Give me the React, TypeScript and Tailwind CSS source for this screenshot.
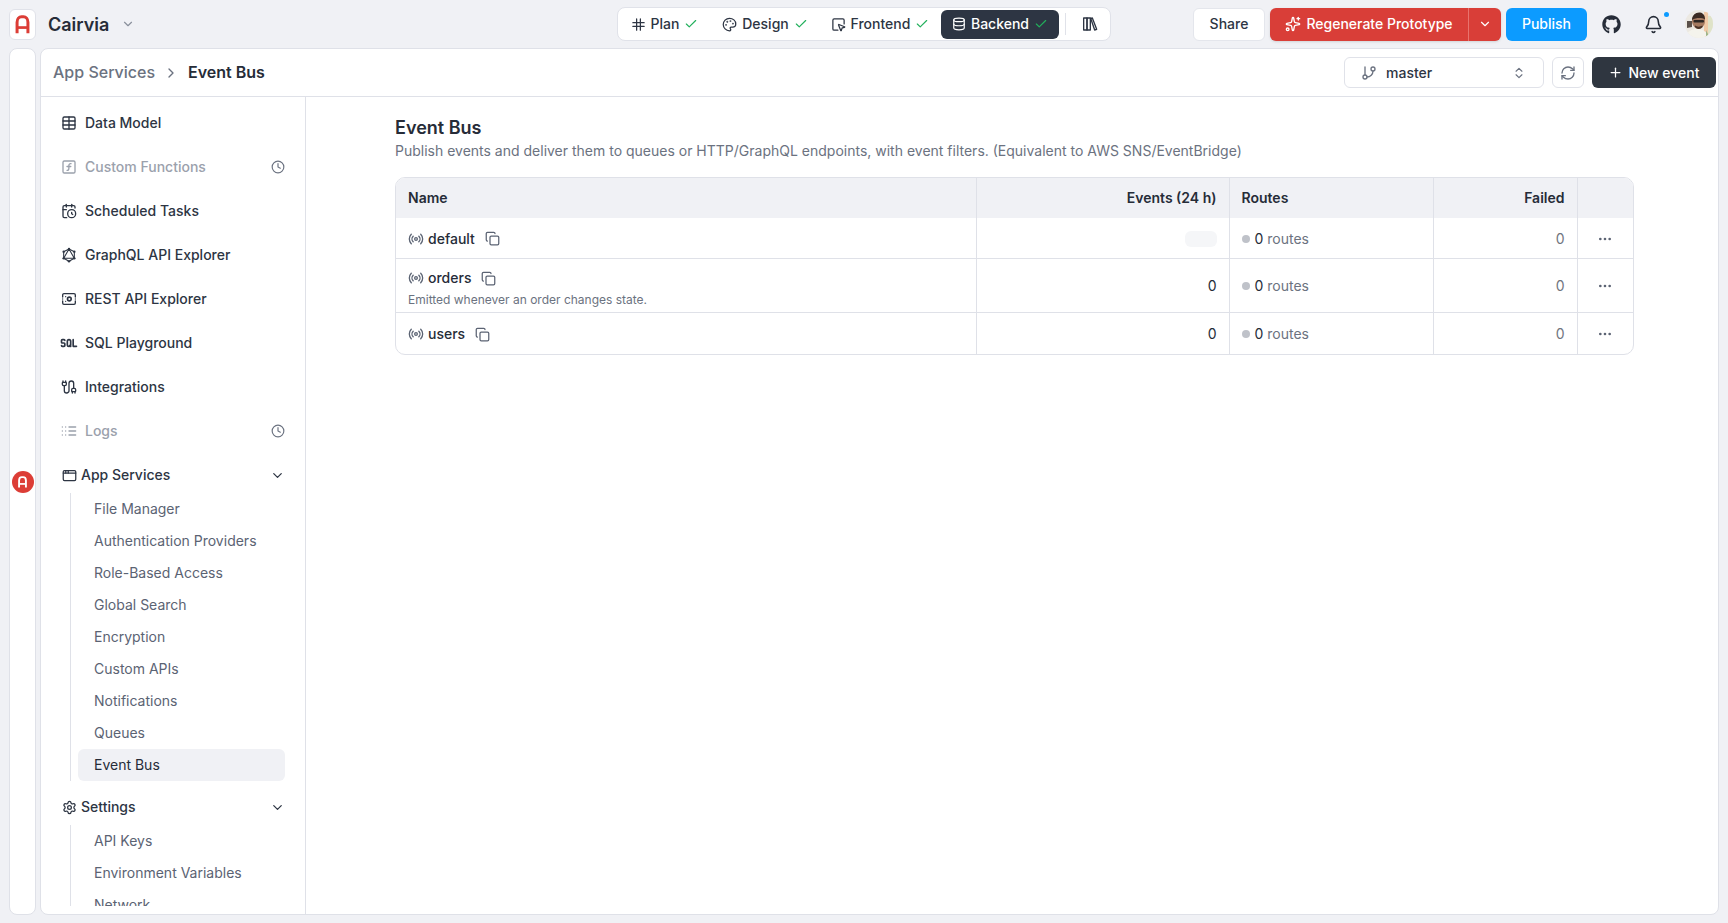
import {
  AppWindow,
  Bell,
  Cable,
  CalendarClock,
  Check,
  ChevronDown,
  ChevronRight,
  ChevronsUpDown,
  Clock,
  Copy,
  Database,
  Ellipsis,
  GitBranch,
  Palette,
  Plus,
  Radio,
  RefreshCw,
  Settings,
  Sparkles,
  SquareFunction,
  SquareMousePointer,
  Table,
} from "lucide-react";
import { FaGithub } from "react-icons/fa";
import { TbSql } from "react-icons/tb";

const Logo = ({ className }: { className?: string }) => (
  <svg viewBox="0 0 24 28" fill="none" className={className}>
    <path
      d="M4 27V10.5C4 5.5 7 2.5 10.5 2.5h3C17 2.5 20 5.5 20 10.5V27"
      stroke="currentColor"
      strokeWidth="4.4"
    />
    <path d="M4 18.5h16" stroke="currentColor" strokeWidth="4" />
  </svg>
);

const PlanIcon = ({ className }: { className?: string }) => (
  <svg viewBox="0 0 24 24" fill="none" stroke="currentColor" strokeWidth="2" strokeLinecap="round" className={className}>
    <path d="M9 3v18M15 3v18M3 9h18M3 15h18" />
  </svg>
);

const BooksIcon = ({ className }: { className?: string }) => (
  <svg viewBox="0 0 24 24" fill="none" stroke="currentColor" strokeWidth="2" strokeLinejoin="round" className={className}>
    <rect x="2.5" y="3" width="5" height="18" />
    <rect x="7.5" y="3" width="5" height="18" />
    <path d="M13 3.5l2.5-.5 6.5 17-3 1z" />
  </svg>
);

const GraphqlIcon = ({ className }: { className?: string }) => (
  <svg viewBox="0 0 24 24" fill="none" stroke="currentColor" strokeWidth="1.6" strokeLinejoin="round" className={className}>
    <path d="M12 3l8 14H4z" />
    <path d="M4 7v10M20 7v10M12 3L4 7M12 3l8 4M4 17l8 4.5 8-4.5" />
    <g fill="currentColor" stroke="none">
      <circle cx="12" cy="3" r="1.8" />
      <circle cx="4" cy="7" r="1.8" />
      <circle cx="20" cy="7" r="1.8" />
      <circle cx="4" cy="17" r="1.8" />
      <circle cx="20" cy="17" r="1.8" />
      <circle cx="12" cy="21.5" r="1.8" />
    </g>
  </svg>
);

const RestIcon = ({ className }: { className?: string }) => (
  <svg viewBox="0 0 24 24" fill="none" stroke="currentColor" strokeWidth="2" strokeLinecap="round" className={className}>
    <path d="M2.5 9V6a2 2 0 0 1 2-2h15a2 2 0 0 1 2 2v3" />
    <path d="M2.5 15v3a2 2 0 0 0 2 2h15a2 2 0 0 0 2-2v-3" />
    <path d="M2.5 12h.01M21.5 12h.01M7 8.5h.01M7 15.5h.01" />
    <circle cx="12.5" cy="12" r="2.8" strokeWidth="2.4" />
  </svg>
);

const LogsIcon = ({ className }: { className?: string }) => (
  <svg viewBox="0 0 24 24" fill="none" stroke="currentColor" strokeWidth="2" strokeLinecap="round" className={className}>
    <path d="M2 6h.01M7 6h.01M2 12h.01M7 12h.01M2 18h.01M7 18h.01M12 6h10M12 12h10M12 18h10" />
  </svg>
);

const Avatar = () => (
  <svg viewBox="0 0 28 28" className="h-[28px] w-[28px] rounded-full">
    <rect width="28" height="28" fill="#ece9e2" />
    <rect x="19" y="2" width="4" height="26" fill="#f0c9a6" />
    <rect x="23" y="6" width="5" height="22" fill="#dfe3c8" />
    <path d="M2 11h5v6l-5 1z" fill="#5a504a" />
    <path d="M0 28c2-7 7-9 12-9s10 2 12 9z" fill="#f4f3ec" />
    <path d="M7 11c0-5 3-8 7-8s6 3 6 8c0 4-3 8-6.500 8S7 15 7 11z" fill="#a57a60" />
    <path d="M7 10c0-5 4-8 8-7.500s5 4 5 7c-3-2-9-2-13 .5z" fill="#3a2a22" />
    <rect x="8.500" y="10" width="10.500" height="2.400" rx="1" fill="#2c2623" />
    <path d="M10 15.500c2 1.500 5 1.500 7.500 0v1.500c-2 2.500-5.500 2.500-7.500 0z" fill="#4a3429" />
    <path d="M21 20l3 6-3 1z" fill="#9db58a" />
  </svg>
);

const steps = [
  { label: "Plan", icon: PlanIcon, width: "w-[87px]" },
  { label: "Design", icon: Palette, width: "w-[114px]" },
  { label: "Frontend", icon: SquareMousePointer, width: "w-[116px]" },
];

const TopBar = () => (
  <header className="flex h-[48px] shrink-0 items-center pl-[9px] pr-[15px]">
    <div className="flex w-[608px] items-center">
      <div className="flex h-[31px] w-[27px] items-center justify-center rounded-md border border-[#e0e2e9] bg-white text-[#dc3d36]">
        <Logo className="h-[19px] w-[17px]" />
      </div>
      <span className="ml-[12px] text-[18px] font-semibold text-[#262c38]">Cairvia</span>
      <ChevronDown className="ml-[12px] h-[14px] w-[14px] text-[#8a909c]" />
    </div>

    <nav className="flex h-[34px] w-[494px] items-center rounded-lg border border-[#e0e2e9] bg-white pl-[3px] text-sm font-medium text-[#2d3543]">
      {steps.map(({ label, icon: Icon, width }) => (
        <div key={label} className={`flex items-center justify-center gap-[5px] ${width}`}>
          <Icon className="h-[15px] w-[15px]" />
          {label}
          <Check className="h-[14px] w-[14px] text-[#22b05c]" />
        </div>
      ))}
      <div className="ml-[3px] flex h-[29px] w-[118px] items-center justify-center gap-[5px] rounded-md bg-[#2d3543] text-white">
        <Database className="h-[14px] w-[14px]" />
        Backend
        <Check className="h-[14px] w-[14px] text-[#22b05c]" />
      </div>
      <div className="ml-[6px] h-[22px] w-px bg-[#e0e2e9]" />
      <BooksIcon className="ml-[16px] h-[16px] w-[16px]" />
    </nav>

    <div className="ml-auto flex items-center">
      <button className="h-[33px] w-[72px] rounded-md border border-[#e4e6ec] bg-white text-sm font-medium text-[#2d3543]">
        Share
      </button>
      <div className="ml-[5px] flex h-[33px] w-[231px] items-center rounded-md bg-[#d93e38] text-sm font-medium text-white shadow-sm">
        <div className="flex flex-1 items-center justify-center gap-[5px]">
          <Sparkles className="h-[16px] w-[16px]" />
          Regenerate Prototype
        </div>
        <div className="flex h-full w-[33px] items-center justify-center border-l border-[#e8736e]">
          <ChevronDown className="h-[14px] w-[14px]" />
        </div>
      </div>
      <button className="ml-[5px] h-[33px] w-[81px] rounded-md bg-[#0c9bff] text-sm font-medium text-white">
        Publish
      </button>
      <FaGithub className="ml-[15px] h-[19px] w-[19px] text-[#262c38]" />
      <div className="relative ml-[23px]">
        <Bell className="h-[19px] w-[19px] text-[#262c38]" />
        <span className="absolute -right-[6px] -top-[3px] h-[5px] w-[5px] rounded-full bg-[#0c9bff]" />
      </div>
      <div className="ml-[22px]">
        <Avatar />
      </div>
    </div>
  </header>
);

const navItems = [
  { label: "Data Model", icon: Table },
  { label: "Custom Functions", icon: SquareFunction, soon: true },
  { label: "Scheduled Tasks", icon: CalendarClock },
  { label: "GraphQL API Explorer", icon: GraphqlIcon },
  { label: "REST API Explorer", icon: RestIcon },
  { label: "SQL Playground", icon: TbSql, wide: true },
  { label: "Integrations", icon: Cable },
  { label: "Logs", icon: LogsIcon, soon: true },
];

const appServices = [
  "File Manager",
  "Authentication Providers",
  "Role-Based Access",
  "Global Search",
  "Encryption",
  "Custom APIs",
  "Notifications",
  "Queues",
  "Event Bus",
];

const settingsItems = ["API Keys", "Environment Variables", "Network"];

const NavGroup = ({
  label,
  icon: Icon,
  items,
  active,
}: {
  label: string;
  icon: typeof Settings;
  items: string[];
  active?: string;
}) => (
  <div>
    <div className="flex h-[36px] items-center gap-[4px] pl-[21px] pr-[20px] font-medium text-[#2d3543]">
      <Icon className="h-[15px] w-[15px]" />
      <span>{label}</span>
      <ChevronDown className="ml-auto h-[15px] w-[15px]" />
    </div>
    <div className="ml-[29px] border-l border-[#dfe1e8] pl-[7px]">
      {items.map((item) => (
        <div
          key={item}
          className={`flex h-[32px] w-[207px] items-center rounded-md px-[16px] ${
            item === active ? "bg-[#f0f1f5] text-[#262c38]" : "text-[#5b6373]"
          }`}
        >
          {item}
        </div>
      ))}
    </div>
  </div>
);

const Sidebar = () => (
  <aside className="flex w-[265px] shrink-0 flex-col border-r border-[#dfe1e8] pb-[8px] pt-[4px] text-sm">
    <div className="flex-1 overflow-hidden">
      {navItems.map(({ label, icon: Icon, soon, wide }) => (
        <div
          key={label}
          className={`flex h-[44px] items-center gap-[8px] pl-[20px] pr-[20px] font-medium ${
            soon ? "text-[#9ba1ac]" : "text-[#2d3543]"
          }`}
        >
          <Icon className={wide ? "-mx-[2px] h-[20px] w-[20px]" : "h-[16px] w-[16px]"} />
          <span>{label}</span>
          {soon && <Clock className="ml-auto h-[14px] w-[14px] text-[#6b7280]" />}
        </div>
      ))}
      <div className="mt-[4px] flex flex-col gap-[8px]">
        <NavGroup label="App Services" icon={AppWindow} items={appServices} active="Event Bus" />
        <NavGroup label="Settings" icon={Settings} items={settingsItems} />
      </div>
    </div>
  </aside>
);

const rows = [
  { name: "default", events: null, height: "h-[40px] pt-[2px]" },
  {
    name: "orders",
    events: "0",
    description: "Emitted whenever an order changes state.",
    height: "h-[54px] pt-[6px]",
  },
  { name: "users", events: "0", height: "h-[42px] pt-[2px]" },
];

const EventTable = () => (
  <div className="mt-[16px] overflow-hidden rounded-[10px] border border-[#dfe1e8]">
    <table className="w-full table-fixed border-collapse text-sm text-[#262c38]">
      <colgroup>
        <col className="w-[580px]" />
        <col className="w-[253px]" />
        <col className="w-[204px]" />
        <col className="w-[144px]" />
        <col />
      </colgroup>
      <thead>
        <tr className="h-[40px] bg-[#f0f1f5] font-medium">
          <th className="border-r border-[#dfe1e8] px-[12px] text-left font-semibold">Name</th>
          <th className="border-r border-[#dfe1e8] px-[12px] text-right font-semibold">Events (24 h)</th>
          <th className="border-r border-[#dfe1e8] px-[12px] text-left font-semibold">Routes</th>
          <th className="border-r border-[#dfe1e8] px-[12px] text-right font-semibold">Failed</th>
          <th />
        </tr>
      </thead>
      <tbody>
        {rows.map((row) => (
          <tr key={row.name} className="border-t border-[#dfe1e8] first:border-t-0">
            <td className={`border-r border-[#dfe1e8] px-[12px] ${row.height}`}>
              <div className="flex items-center">
                <Radio className="h-[16px] w-[16px] text-[#5b6373]" />
                <span className="ml-[4px] font-medium">{row.name}</span>
                <Copy className="ml-[10px] h-[15px] w-[15px] text-[#5b6373]" />
              </div>
              {row.description && (
                <div className="mt-[4px] text-xs text-[#6b7280]">{row.description}</div>
              )}
            </td>
            <td className="border-r border-[#dfe1e8] px-[12px] pt-[2px] text-right">
              {row.events ?? (
                <div className="ml-auto h-[16px] w-[32px] rounded-md bg-[#f5f6f8]" />
              )}
            </td>
            <td className="border-r border-[#dfe1e8] px-[12px] pt-[2px]">
              <div className="flex items-center gap-[5px]">
                <span className="h-[8px] w-[8px] rounded-full bg-[#bfc2c9]" />
                <span>
                  0 <span className="text-[#6b7280]">routes</span>
                </span>
              </div>
            </td>
            <td className="border-r border-[#dfe1e8] px-[12px] pt-[2px] text-right text-[#71757e]">0</td>
            <td className="pt-[2px]">
              <Ellipsis className="mx-auto h-[16px] w-[16px] text-[#5b6373]" />
            </td>
          </tr>
        ))}
      </tbody>
    </table>
  </div>
);

export default function App() {
  return (
    <div className="flex h-screen w-full flex-col overflow-hidden bg-[#f0f1f5] font-['Inter',sans-serif]">
      <TopBar />
      <div className="flex min-h-0 flex-1 gap-[4px] pb-[8px] pl-[9px] pr-[9px]">
        <div className="flex w-[27px] shrink-0 items-center justify-center rounded-lg border border-[#dfe1e8] bg-white">
          <div className="flex h-[22px] w-[22px] items-center justify-center rounded-full bg-[#dc3d36] text-white">
            <Logo className="h-[12px] w-[11px]" />
          </div>
        </div>

        <main className="flex min-w-0 flex-1 flex-col rounded-lg border border-[#dfe1e8] bg-white">
          <div className="flex h-[48px] shrink-0 items-center border-b border-[#dfe1e8] pl-[12px] pr-[2px]">
            <span className="-mt-px font-medium text-[#6b7280]">App Services</span>
            <ChevronRight className="ml-[8px] mr-[9px] h-[16px] w-[16px] text-[#6b7280]" />
            <span className="-mt-px font-semibold text-[#262c38]">Event Bus</span>
            <div className="ml-auto flex h-[31px] w-[200px] items-center rounded-md border border-[#e0e2e9] pl-[16px] pr-[17px] text-sm font-medium text-[#2d3543]">
              <GitBranch className="h-[16px] w-[16px] text-[#6b7280]" />
              <span className="ml-[9px]">master</span>
              <ChevronsUpDown className="ml-auto h-[14px] w-[14px] text-[#6b7280]" />
            </div>
            <div className="ml-[8px] flex h-[31px] w-[32px] items-center justify-center rounded-md border border-[#e0e2e9] text-[#6b7280]">
              <RefreshCw className="h-[16px] w-[16px]" />
            </div>
            <button className="ml-[8px] flex h-[31px] w-[124px] items-center justify-center gap-[5px] rounded-md bg-[#2f3640] text-sm font-medium text-white">
              <Plus className="h-[15px] w-[15px]" />
              New event
            </button>
          </div>

          <div className="flex min-h-0 flex-1">
            <Sidebar />
            <section className="flex-1 pl-[89px] pr-[84px] pt-[18px]">
              <h1 className="text-lg font-semibold leading-[26px] text-[#262c38]">Event Bus</h1>
              <p className="text-sm leading-[20px] text-[#6b7280]">
                Publish events and deliver them to queues or HTTP/GraphQL endpoints, with event filters. (Equivalent to AWS SNS/EventBridge)
              </p>
              <EventTable />
            </section>
          </div>
        </main>
      </div>
    </div>
  );
}
